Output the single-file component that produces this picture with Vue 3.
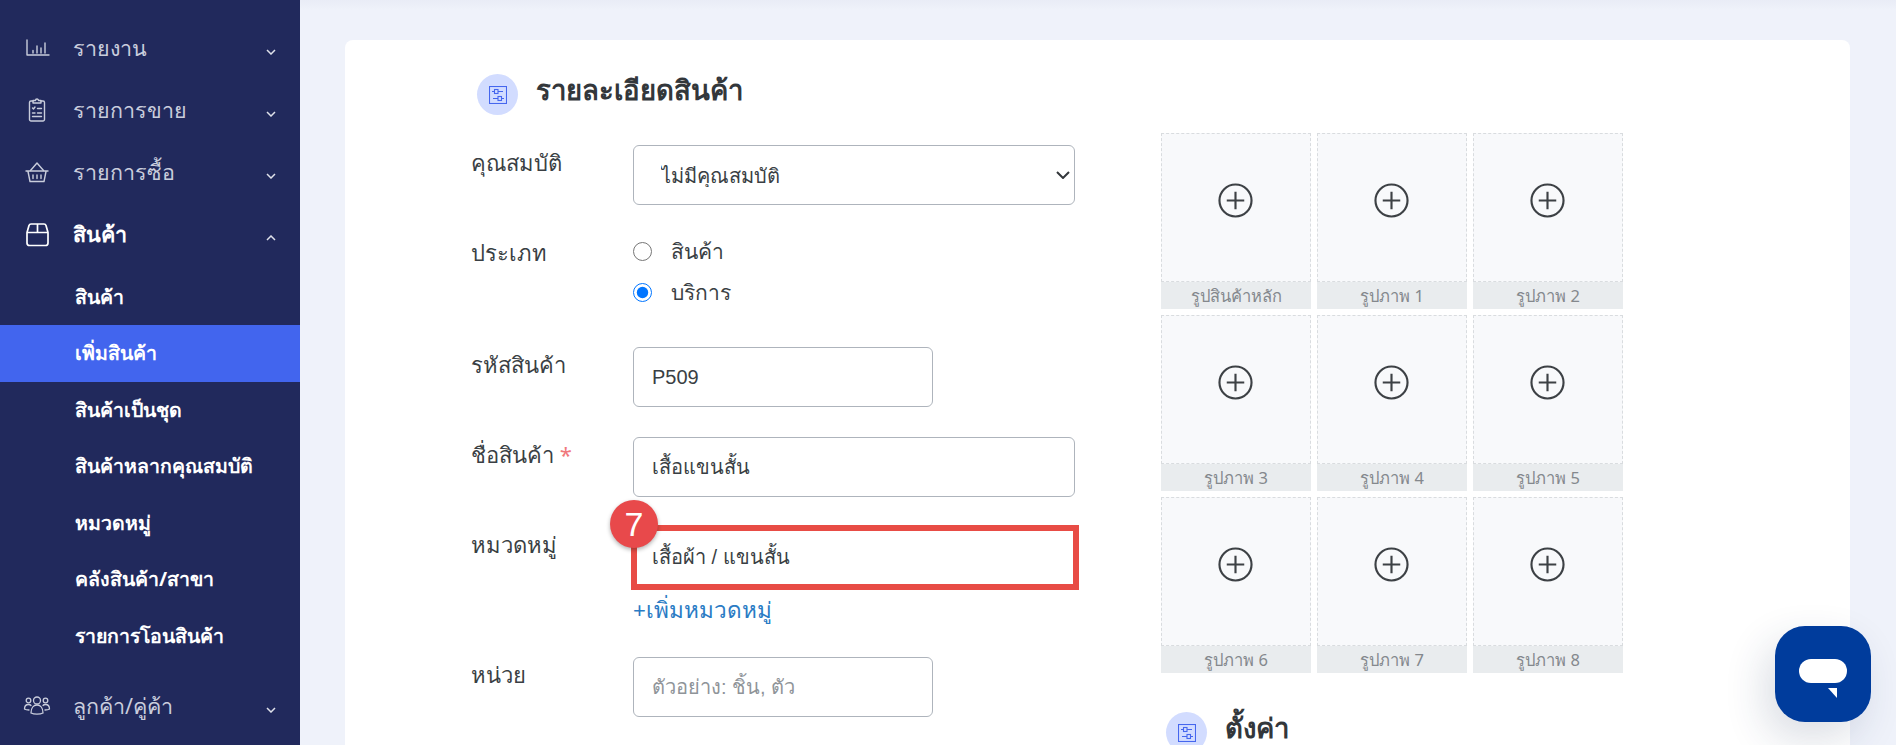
<script setup>
const topMenu = [
  { label: 'รายงาน', icon: 'chart' },
  { label: 'รายการขาย', icon: 'clip' },
  { label: 'รายการซื้อ', icon: 'basket' },
]
const subMenu = ['สินค้า', 'เพิ่มสินค้า', 'สินค้าเป็นชุด', 'สินค้าหลากคุณสมบัติ', 'หมวดหมู่', 'คลังสินค้า/สาขา', 'รายการโอนสินค้า']
const tiles = ['รูปสินค้าหลัก', 'รูปภาพ 1', 'รูปภาพ 2', 'รูปภาพ 3', 'รูปภาพ 4', 'รูปภาพ 5', 'รูปภาพ 6', 'รูปภาพ 7', 'รูปภาพ 8']
</script>

<template>
  <div class="page">
    <aside class="side">
      <div v-for="m in topMenu" :key="m.label" class="row">
        <svg class="ico" viewBox="0 0 28 28" fill="none" stroke="currentColor" stroke-width="1.4" stroke-linecap="round" stroke-linejoin="round">
          <template v-if="m.icon === 'chart'">
            <path d="M4 6V21H26" />
            <path d="M10 16.5V19M14 12V19M18 14V19M22 9V19" />
          </template>
          <template v-else-if="m.icon === 'clip'">
            <path d="M10 5H8a1.5 1.5 0 0 0-1.500 1.500V23.500A1.500 1.500 0 0 0 8 25H20a1.500 1.500 0 0 0 1.500-1.500V6.500A1.500 1.500 0 0 0 20 5H18" />
            <path d="M10 7V4.500H12.500a1.500 1.500 0 0 1 3 0H18V7Z" />
            <path d="M9.500 12l1 1 1.500-2M14.500 12.500H18.500M9.500 17H12M14.500 17H18.500M9.500 20.500H18.500" />
          </template>
          <template v-else>
            <path d="M7.500 12.500L14 5L20.500 12.500" />
            <path d="M3 13H25M5 13.500L7 23.500H21L23 13.500" />
            <path d="M10 17V20.500M14 17V20.500M18 17V20.500" />
          </template>
        </svg>
        <span class="row-text">{{ m.label }}</span>
        <svg class="chev" viewBox="0 0 10 6" fill="none" stroke="currentColor" stroke-width="1.500"><path d="M1 1L5 5L9 1" /></svg>
      </div>

      <div class="row row-open">
        <svg class="ico" viewBox="0 0 28 28" fill="none" stroke="currentColor" stroke-width="1.700" stroke-linejoin="round">
          <path d="M4 12.500L6 5.500Q6.500 4 8 4H21Q22.500 4 23 5.500L25 12.500V23Q25 25.500 22.500 25.500H6.500Q4 25.500 4 23Z" />
          <path d="M4 12.500H25M14.500 4V12.500" />
        </svg>
        <span class="row-text">สินค้า</span>
        <svg class="chev" viewBox="0 0 10 6" fill="none" stroke="currentColor" stroke-width="1.500"><path d="M1 5L5 1L9 5" /></svg>
      </div>

      <nav class="sub">
        <div v-for="s in subMenu" :key="s" class="sub-row" :class="{ active: s === 'เพิ่มสินค้า' }">{{ s }}</div>
      </nav>

      <div class="row row-last">
        <svg class="ico" viewBox="0 0 28 28" fill="none" stroke="currentColor" stroke-width="1.300" stroke-linecap="round">
          <circle cx="14" cy="8.500" r="3.500" />
          <circle cx="5.500" cy="8.500" r="2.300" />
          <circle cx="22.500" cy="8.500" r="2.300" />
          <path d="M8 21c0-5 2.500-8 6-8s6 3 6 8c-3 1.500-9 1.500-12 0Z" />
          <path d="M1.500 17c0-3 1.500-4.500 4-4.500 1 0 2 .3 2.500 1M26.500 17c0-3-1.500-4.500-4-4.500-1 0-2 .3-2.500 1M1.500 17c1 .7 2.500 1 4.500 1M26.500 17c-1 .7-2.500 1-4.500 1" />
        </svg>
        <span class="row-text">ลูกค้า/คู่ค้า</span>
        <svg class="chev" viewBox="0 0 10 6" fill="none" stroke="currentColor" stroke-width="1.500"><path d="M1 1L5 5L9 1" /></svg>
      </div>
    </aside>

    <main class="main">
      <section class="card">
        <div class="left">
          <h2 class="head">
            <span class="head-ico">
              <svg viewBox="0 0 18 18" width="18" height="18" fill="none" stroke="#4566ee" stroke-width="1.100">
                <rect x=".5" y=".5" width="17" height="17" />
                <path d="M3 5.500H5.500M9 5.500H14M4 12.500H9M12.500 12.500H15" />
                <rect x="5.500" y="3.500" width="3.500" height="4" />
                <rect x="9" y="10.500" width="3.500" height="4" />
              </svg>
            </span>
            <span class="head-text">รายละเอียดสินค้า</span>
          </h2>

          <div class="form">
            <label class="lab">คุณสมบัติ</label>
            <div class="sel-wrap">
              <select class="ctl wide sel"><option>ไม่มีคุณสมบัติ</option></select>
              <svg class="sel-arrow" viewBox="0 0 14 8" fill="none" stroke="#33373b" stroke-width="2"><path d="M1 1L7 7L13 1" /></svg>
            </div>

            <label class="lab">ประเภท</label>
            <div class="radios">
              <label class="radio"><input type="radio" name="kind" />สินค้า</label>
              <label class="radio"><input type="radio" name="kind" checked />บริการ</label>
            </div>

            <label class="lab">รหัสสินค้า</label>
            <input class="ctl short" value="P509" />

            <label class="lab">ชื่อสินค้า <span class="req">*</span></label>
            <input class="ctl wide" value="เสื้อแขนสั้น" />

            <label class="lab">หมวดหมู่</label>
            <div class="cat">
              <div class="marked">
                <input class="ctl wide" value="เสื้อผ้า / แขนสั้น" />
                <span class="red-box"></span>
                <span class="badge">7</span>
              </div>
              <a class="add">+เพิ่มหมวดหมู่</a>
            </div>

            <label class="lab">หน่วย</label>
            <input class="ctl short" placeholder="ตัวอย่าง: ชิ้น, ตัว" />
          </div>
        </div>

        <div class="right">
          <div class="tiles">
            <div v-for="t in tiles" :key="t" class="tile">
              <div class="tile-area">
                <svg width="35" height="35" viewBox="0 0 36 36" fill="none" stroke="#3d4145" stroke-width="2.200">
                  <circle cx="18" cy="18" r="16.500" />
                  <path d="M18 9V27M9 18H27" />
                </svg>
              </div>
              <div class="tile-cap">{{ t }}</div>
            </div>
          </div>
          <h2 class="head head-set">
            <span class="head-ico">
              <svg viewBox="0 0 18 18" width="18" height="18" fill="none" stroke="#4566ee" stroke-width="1.100">
                <rect x=".5" y=".5" width="17" height="17" />
                <path d="M3 5.500H5.500M9 5.500H14M4 12.500H9M12.500 12.500H15" />
                <rect x="5.500" y="3.500" width="3.500" height="4" />
                <rect x="9" y="10.500" width="3.500" height="4" />
              </svg>
            </span>
            <span class="head-text">ตั้งค่า</span>
          </h2>
        </div>
      </section>
    </main>

    <button class="chat" aria-label="chat">
      <span class="bubble"></span>
      <span class="tail"></span>
    </button>
  </div>
</template>

<style scoped>
.page {
  position: relative;
  display: flex;
  height: 745px;
  overflow: hidden;
  font-family: "Noto Sans", "Liberation Sans", sans-serif;
}
.side {
  width: 300px;
  flex: none;
  padding-top: 19px;
  background: #21295c;
  color: #c9cddc;
}
.row {
  display: flex;
  align-items: center;
  height: 62px;
  padding: 0 24px 0 23px;
}
.row-open { color: #fff; font-weight: 700; }
.row-last { margin-top: 12.500px; }
.ico {
  width: 28px;
  height: 28px;
  flex: none;
  margin-right: 22px;
  position: relative;
  top: -2px;
}
.row-text { font-size: 21.500px; line-height: 30px; margin-top: -4px; }
.chev { width: 10px; height: 6px; margin-left: auto; position: relative; top: 2px; color: #dfe1ea; }
.sub { padding-top: 1.500px; }
.sub-row {
  height: 56.500px;
  line-height: 56.500px;
  padding-left: 75px;
  font-size: 19.500px;
  font-weight: 700;
  color: #fff;
}
.active { background: #4265ee; }

.main {
  flex: 1;
  min-width: 0;
  padding: 40px 46px 0 45px;
  background: linear-gradient(#e9ecf6, #eff2fa 10px);
}
.card {
  display: flex;
  height: 705px;
  padding: 34px 0 0 126px;
  background: #fff;
  border-radius: 8px 8px 0 0;
  color: #3a3f44;
}
.left { width: 690px; flex: none; }
.right { margin-top: 59px; flex: 1; }
.head {
  display: flex;
  align-items: center;
  gap: 18px;
  height: 41px;
  margin: 0 0 0 6px;
  font-size: 27.500px;
  font-weight: 600;
  color: #33373b;
}
.head-text { margin-top: -9px; }
.head-ico {
  display: flex;
  align-items: center;
  justify-content: center;
  width: 41px;
  height: 41px;
  flex: none;
  border-radius: 50%;
  background: #d2dcff;
}
.head-set { margin: 39px 0 0 5px; }
.form {
  display: grid;
  grid-template-columns: 162px 1fr;
  row-gap: 30px;
  margin-top: 30px;
}
.lab { font-size: 22px; line-height: 34px; color: #3a3f44; }
.req { color: #f0787c; }
.ctl {
  display: block;
  box-sizing: border-box;
  height: 60px;
  padding: 0 18px;
  border: 1px solid #aeb4bc;
  border-radius: 6px;
  background: #fff;
  color: #3a3f44;
  font: 20px "Liberation Sans", "Noto Sans", sans-serif;
  outline: none;
}
.ctl::placeholder { color: #8f9499; }
.wide { width: 442px; }
.short { width: 300px; }
.sel-wrap { position: relative; width: 442px; }
.sel { padding: 2px 27px 0; appearance: none; }
.sel-arrow {
  position: absolute;
  right: 5px;
  top: 26px;
  width: 14px;
  height: 8px;
  pointer-events: none;
}
.radios { margin: -4px 0 4px; display: flex; flex-direction: column; }
.radio {
  display: flex;
  align-items: center;
  height: 41px;
  font-size: 21px;
  color: #3a3f44;
}
.radio input { width: 19px; height: 19px; margin: 0 19px 0 0; }
.cat { display: flex; flex-direction: column; }
.marked { position: relative; width: 442px; }
.red-box {
  position: absolute;
  inset: -2px -4px -3px -2px;
  border: 6.500px solid #e84c45;
}
.badge {
  position: absolute;
  left: -23px;
  top: -27px;
  width: 48px;
  height: 48px;
  border-radius: 50%;
  background: #e8494b;
  box-shadow: 0 2px 4px rgba(0, 0, 0, .3);
  color: #fff;
  font: 34px/48px "Liberation Sans", sans-serif;
  text-align: center;
}
.add { margin-top: 6px; font-size: 22.500px; line-height: 34px; color: #2a7bc4; }

.tiles {
  display: grid;
  grid-template-columns: repeat(3, 150px);
  gap: 6px;
}
.tile { display: flex; flex-direction: column; height: 176px; }
.tile-area {
  flex: 1;
  display: flex;
  align-items: center;
  justify-content: center;
  padding: 0 2px 14px 0;
  border: 1px dashed #d9dcdf;
  background: #f8f9fb;
}
.tile-cap {
  height: 27px;
  background: #e9ecee;
  color: #84888d;
  font-size: 16.500px;
  line-height: 27px;
  text-align: center;
}
.chat {
  position: absolute;
  left: 1775px;
  top: 626px;
  width: 96px;
  height: 96px;
  padding: 0;
  border: 0;
  border-radius: 30px;
  background: #003c9c;
  box-shadow: -10px 16px 40px rgba(30, 50, 90, .16);
}
.bubble {
  position: absolute;
  left: 24px;
  top: 33px;
  width: 48px;
  height: 24px;
  border-radius: 12px;
  background: #fff;
}
.tail {
  position: absolute;
  left: 53px;
  top: 62px;
  width: 9px;
  height: 10px;
  background: #fff;
  clip-path: polygon(0 0, 100% 0, 100% 100%);
}
</style>

<style>
html, body { margin: 0; }
</style>
